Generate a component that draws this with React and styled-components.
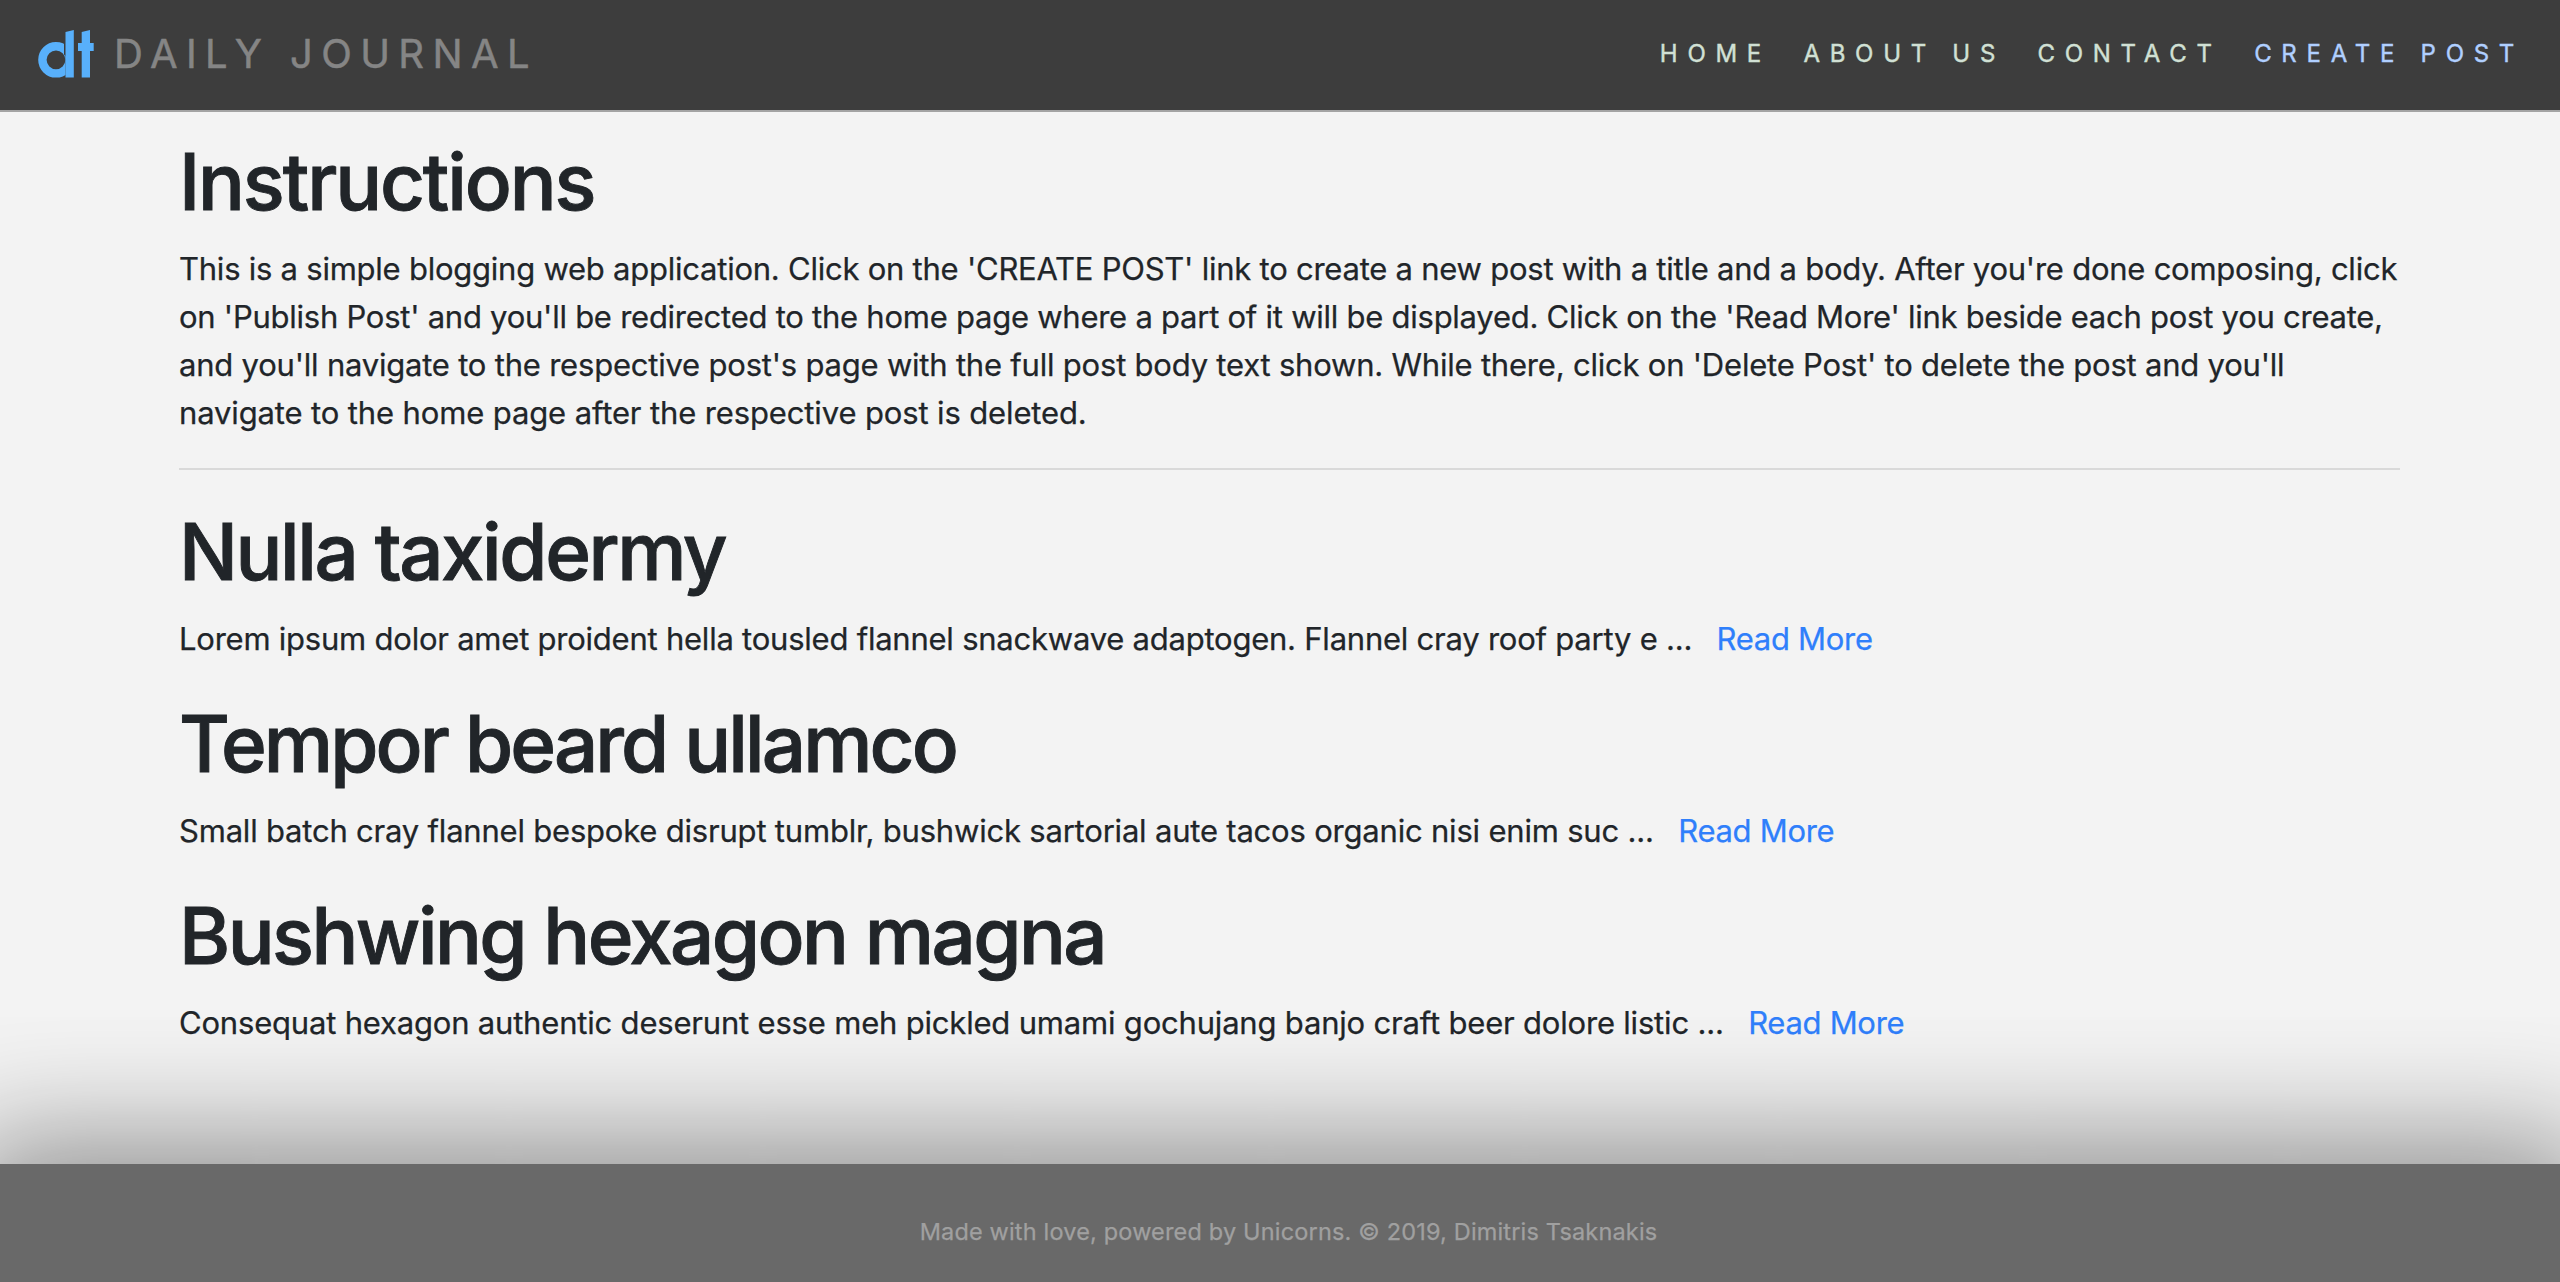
import React from "react";
import styled, { createGlobalStyle } from "styled-components";

const GlobalStyle = createGlobalStyle`
  *, *::before, *::after { box-sizing: border-box; }
  body {
    margin: 0;
    background: #f3f3f3;
    color: #212529;
    font-family: Inter, "Liberation Sans", sans-serif;
    font-size: 31px;
    line-height: 48px;
    -webkit-text-stroke: 0.25px;
    overflow: hidden;
  }
`;

const Page = styled.div`
  display: flex;
  flex-direction: column;
  height: 1282px;
`;

const Header = styled.header`
  display: flex;
  flex: none;
  align-items: center;
  justify-content: space-between;
  height: 112px;
  padding: 0 36px 0 38px;
  background: #3d3d3d;
  border-bottom: 2px solid #a3a3a3;
`;

const Brand = styled.a`
  display: flex;
  align-items: center;
  gap: 20px;
  margin-bottom: 2px;
  color: #858585;
  font-size: 40px;
  letter-spacing: 8.4px;
  text-decoration: none;
  -webkit-text-stroke: 0.5px;
`;

const Logo = styled.svg`
  display: block;
  width: 56px;
  height: 48px;
`;

const Nav = styled.nav`
  display: flex;
  gap: 32.5px;
  margin-bottom: 2px;
`;

const NavLink = styled.a`
  color: ${(p) => (p.$accent ? "#b0cfff" : "#d1e0d4")};
  font-size: 24px;
  letter-spacing: 9.7px;
  text-decoration: none;
  -webkit-text-stroke: 0.4px;
`;

const Main = styled.main`
  flex: 1;
  padding: 20px 160px 0 179px;
`;

const Title = styled.h1`
  margin: 0 0 16px;
  padding-top: 3px;
  font-size: 78px;
  font-weight: 500;
  line-height: 93px;
  letter-spacing: ${(p) => p.$tracking}px;
  -webkit-text-stroke: 0.9px;
`;

const Text = styled.p`
  margin: 0 0 31px;
  padding-top: 1px;
  white-space: nowrap;
`;

const Line = styled.span`
  letter-spacing: ${(p) => p.$tracking}px;
`;

const Divider = styled.hr`
  height: 2px;
  margin: 0 0 32px;
  border: 0;
  background: #d9d9d9;
`;

const ReadMore = styled.a`
  margin-left: 24.5px;
  color: #2f7ffb;
  letter-spacing: -0.3px;
  text-decoration: none;
`;

const Footer = styled.footer`
  flex: none;
  height: 118px;
  padding: 44px 0 0 17px;
  background: #696969;
  box-shadow: 0 10px 120px 34px rgba(0, 0, 0, 0.41);
  color: #a0a0a0;
  font-size: 23.5px;
  letter-spacing: 0.17px;
  text-align: center;
`;

const instructions = [
  {
    text: "This is a simple blogging web application. Click on the 'CREATE POST' link to create a new post with a title and a body. After you're done composing, click",
    tracking: -0.237,
  },
  {
    text: "on 'Publish Post' and you'll be redirected to the home page where a part of it will be displayed. Click on the 'Read More' link beside each post you create,",
    tracking: -0.25,
  },
  {
    text: "and you'll navigate to the respective post's page with the full post body text shown. While there, click on 'Delete Post' to delete the post and you'll",
    tracking: -0.21,
  },
  {
    text: "navigate to the home page after the respective post is deleted.",
    tracking: -0.13,
  },
];

const posts = [
  {
    title: "Nulla taxidermy",
    titleTracking: -2.43,
    excerpt: "Lorem ipsum dolor amet proident hella tousled flannel snackwave adaptogen. Flannel cray roof party e ...",
    tracking: -0.23,
  },
  {
    title: "Tempor beard ullamco",
    titleTracking: -2.9,
    excerpt: "Small batch cray flannel bespoke disrupt tumblr, bushwick sartorial aute tacos organic nisi enim suc ...",
    tracking: -0.2,
  },
  {
    title: "Bushwing hexagon magna",
    titleTracking: -2.57,
    excerpt: "Consequat hexagon authentic deserunt esse meh pickled umami gochujang banjo craft beer dolore listic ...",
    tracking: -0.19,
  },
];

const links = ["HOME", "ABOUT US", "CONTACT", "CREATE POST"];

export default function App() {
  return (
    <Page>
      <GlobalStyle />
      <Header>
        <Brand>
          <Logo viewBox="0 0 56 48" fill="#58b0fb" aria-label="dt">
            <circle cx="18" cy="29.8" r="13.6" fill="none" stroke="#58b0fb" strokeWidth="8.4" />
            <path d="M26 11H36V48H27.5V26L26 24.5Z" fill="#3d3d3d" />
            <path d="M27.5 2L35.8 0V47.6H27.5Z" />
            <path d="M43.7 2L52 0V13H55.7V21H52V47.6H43.7V21H40V13H43.7Z" />
          </Logo>
          DAILY JOURNAL
        </Brand>
        <Nav>
          {links.map((label) => (
            <NavLink key={label} $accent={label === "CREATE POST"}>{label}</NavLink>
          ))}
        </Nav>
      </Header>
      <Main>
        <Title $tracking={-2.15}>Instructions</Title>
        <Text>
          {instructions.map((line, i) => (
            <React.Fragment key={line.text}>
              {i > 0 && <br />}
              <Line $tracking={line.tracking}>{line.text}</Line>
            </React.Fragment>
          ))}
        </Text>
        <Divider />
        {posts.map((post) => (
          <article key={post.title}>
            <Title $tracking={post.titleTracking}>{post.title}</Title>
            <Text>
              <Line $tracking={post.tracking}>{post.excerpt}</Line>
              <ReadMore>Read More</ReadMore>
            </Text>
          </article>
        ))}
      </Main>
      <Footer>Made with love, powered by Unicorns. © 2019, Dimitris Tsaknakis</Footer>
    </Page>
  );
}
